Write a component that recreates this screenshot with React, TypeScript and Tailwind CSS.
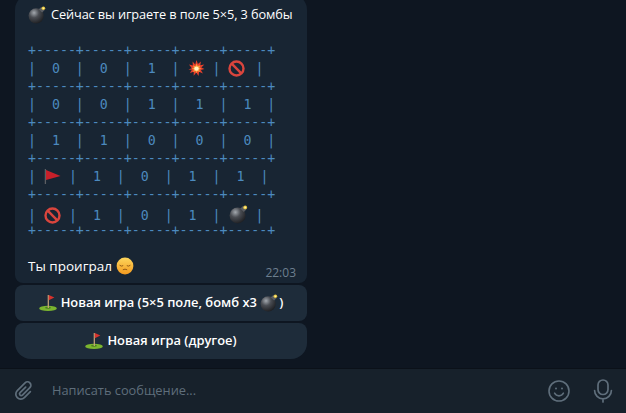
import React from "react";

const Bomb = ({ size = 20 }: { size?: number }) => (
  <svg width={size} height={size} viewBox="0 0 20 20" className="inline-block shrink-0 align-[-4px]">
    <defs>
      <radialGradient id="bombFill" cx="0.36" cy="0.3" r="0.8">
        <stop offset="0" stopColor="#a3a8ae" />
        <stop offset="0.4" stopColor="#4a4d53" />
        <stop offset="1" stopColor="#17181b" />
      </radialGradient>
    </defs>
    <circle cx="8.6" cy="11.4" r="8" fill="url(#bombFill)" />
    <path d="M11.4 4.6l2.6-2.6 3.4 3.4-2.6 2.6z" fill="#5a5d63" />
    <circle cx="16.2" cy="3.4" r="1.9" fill="#e9c63a" />
    <circle cx="16.2" cy="3.4" r="0.9" fill="#fff2a8" />
  </svg>
);

const Boom = () => (
  <svg width="17" height="17" viewBox="0 0 17 17" className="inline-block shrink-0 align-[-4px]">
    <path
      d="M8.5 0l1.4 4 3-2.6-.6 3.8 4-.6-3 3 3.2 1.4-3.6 1 2 3.4-3.8-1.6-.6 4.2-2.2-3.4-2.6 3.2v-4l-3.8 1.2 2-3.2L.4 9.6l3.4-1.4L1 4.6l3.8.8-.2-4 2.6 3z"
      fill="#e8412c"
    />
    <path d="M8.5 3.6l1.2 2.4 2.6-.6-1 2.4 2.2 1-2.4.8.8 2.4-2.4-1-1 2.2-1-2.2-2.4 1 .8-2.4-2.2-1 2.2-.8-.8-2.4 2.4.8z" fill="#f8a23a" />
    <circle cx="8.5" cy="8.6" r="2.2" fill="#fff3c4" />
  </svg>
);

const NoEntry = () => (
  <svg width="17" height="17" viewBox="0 0 17 17" className="inline-block shrink-0 align-[-4px]">
    <circle cx="8.5" cy="8.5" r="7" fill="none" stroke="#d9453d" strokeWidth="2.4" />
    <path d="M3.7 3.7l9.6 9.6" stroke="#d9453d" strokeWidth="2.4" />
  </svg>
);

const RedFlag = () => (
  <svg width="17" height="17" viewBox="0 0 17 17" className="inline-block shrink-0 align-[-4px]">
    <path d="M1.4 1v15" stroke="#5c5f63" strokeWidth="1.3" />
    <path d="M2 2l14.5 6L2 12z" fill="#c8202a" />
  </svg>
);

const Pensive = () => (
  <svg width="18" height="18" viewBox="0 0 18 18" className="inline-block shrink-0">
    <defs>
      <linearGradient id="faceFill" x1="0" y1="0" x2="0" y2="1">
        <stop offset="0" stopColor="#fdd65c" />
        <stop offset="1" stopColor="#f39a1f" />
      </linearGradient>
    </defs>
    <circle cx="9" cy="9" r="8.4" fill="url(#faceFill)" />
    <path d="M3.6 8.2q1.8 1.6 3.6.4M10.8 8.6q1.8 1.2 3.6-.4" stroke="#8a5212" strokeWidth="0.9" fill="none" />
    <path d="M6.8 12.8q2.2-1.3 4.4 0" stroke="#8a5212" strokeWidth="0.9" fill="none" />
  </svg>
);

const GolfFlag = () => (
  <svg width="18" height="18" viewBox="0 0 18 18" className="inline-block shrink-0">
    <ellipse cx="9" cy="14.4" rx="8.8" ry="2.7" fill="#7bb52f" />
    <ellipse cx="9" cy="13.8" rx="3" ry="1" fill="#4d7f1f" />
    <path d="M9.3 1v13" stroke="#c9a77a" strokeWidth="1.2" />
    <path d="M9.8 1l5.6 2.6-5.6 2.6z" fill="#d8322c" />
  </svg>
);

// emoji cells are a little narrower or wider than the five mono chars around them
const Slot = ({ w, children }: { w: 17 | 19; children: React.ReactNode }) => (
  <span className={w === 17 ? "inline-block w-[17px]" : "inline-block w-[19px]"}>{children}</span>
);

const Sep = () => <div className="h-[18px]">+-----+-----+-----+-----+-----+</div>;

const rows: React.ReactNode[] = [
  <>|  0  |  0  |  1  | <Slot w={17}><Boom /></Slot> | <Slot w={19}><NoEntry /></Slot> |</>,
  <>|  0  |  0  |  1  |  1  |  1  |</>,
  <>|  1  |  1  |  0  |  0  |  0  |</>,
  <>| <Slot w={17}><RedFlag /></Slot> |  1  |  0  |  1  |  1  |</>,
  <>| <Slot w={17}><NoEntry /></Slot> |  1  |  0  |  1  | <Slot w={19}><Bomb /></Slot> |</>,
];

function KeyButton({ children }: { children: React.ReactNode }) {
  return (
    <div className="flex h-9 items-center justify-center gap-1 rounded-lg bg-[#1e2c3a] text-[12.9px] font-semibold text-white">
      {children}
    </div>
  );
}

export default function App() {
  return (
    <div className="flex h-[413px] w-[626px] flex-col overflow-hidden bg-[#0e1621] font-['Open_Sans',sans-serif]">
      <div className="flex flex-1 flex-col justify-end overflow-hidden pb-[9px] pl-[15px]">
        <div className="w-[292px] rounded-b-lg rounded-t-2xl bg-[#182533] pb-[4px] pl-[13px] pr-[11px] pt-[10px] text-white">
          <div className="flex h-5 items-center gap-1 whitespace-nowrap text-[12.75px] leading-5 tracking-[-0.1px]">
            <Bomb size={19} />
            <span>Сейчас вы играете в поле 5×5, 3 бомбы</span>
          </div>
          <div className="mt-[18px] whitespace-pre font-['DejaVu_Sans_Mono',monospace] text-[13.25px] leading-[18px] text-[#4c8abf]">
            <Sep />
            {rows.map((row, i) => (
              <React.Fragment key={i}>
                <div className="h-[18px]">{row}</div>
                <Sep />
              </React.Fragment>
            ))}
          </div>
          <div className="mt-4 flex h-[23px] items-start justify-between">
            <div className="flex h-5 items-center gap-1 text-[13.5px]">
              Ты проиграл <Pensive />
            </div>
            <span className="mt-[9px] text-xs text-[#6d7f8f]">22:03</span>
          </div>
        </div>
        <div className="mt-[2px] flex w-[292px] flex-col gap-[2px]">
          <KeyButton>
            <GolfFlag />
            <span className="flex items-center whitespace-pre">
              Новая игра (5×5 поле, бомб х3 <Bomb size={19} />)
            </span>
          </KeyButton>
          <div className="flex h-9 items-center justify-center gap-1 rounded-b-2xl rounded-t-lg bg-[#1e2c3a] text-[12.9px] font-semibold text-white">
            <GolfFlag />
            <span>Новая игра (другое)</span>
          </div>
        </div>
      </div>
      <div className="flex h-[45px] items-center border-t border-[#0b1119] bg-[#17212b] pl-3 pr-[11px] text-[#5f6e7b]">
        <svg width="24" height="24" viewBox="0 0 24 24" fill="none" stroke="currentColor" strokeWidth="1.7" strokeLinecap="round" strokeLinejoin="round">
          <g transform="rotate(45 12 12)">
            <path d="M17 8v8.5a5 5 0 0 1-10 0V5.5a3.4 3.4 0 0 1 6.8 0v10.5a1.7 1.7 0 0 1-3.4 0V8" />
          </g>
        </svg>
        <span className="ml-4 flex-1 text-[12.8px] text-[#5f6e7b]">Написать сообщение...</span>
        <svg width="24" height="24" viewBox="0 0 24 24" fill="none" stroke="currentColor" strokeWidth="1.6" strokeLinecap="round" className="mr-5">
          <circle cx="12" cy="12" r="10" />
          <path d="M7.6 14.2a5 5 0 0 0 8.8 0" />
          <circle cx="9" cy="9.6" r="1" fill="currentColor" stroke="none" />
          <circle cx="15" cy="9.6" r="1" fill="currentColor" stroke="none" />
        </svg>
        <svg width="24" height="24" viewBox="0 0 24 24" fill="none" stroke="currentColor" strokeWidth="1.7" strokeLinecap="round">
          <rect x="7" y="1" width="10" height="14.5" rx="5" />
          <path d="M3.6 11.5a8.4 8.4 0 0 0 16.8 0M12 20v3" />
        </svg>
      </div>
    </div>
  );
}
